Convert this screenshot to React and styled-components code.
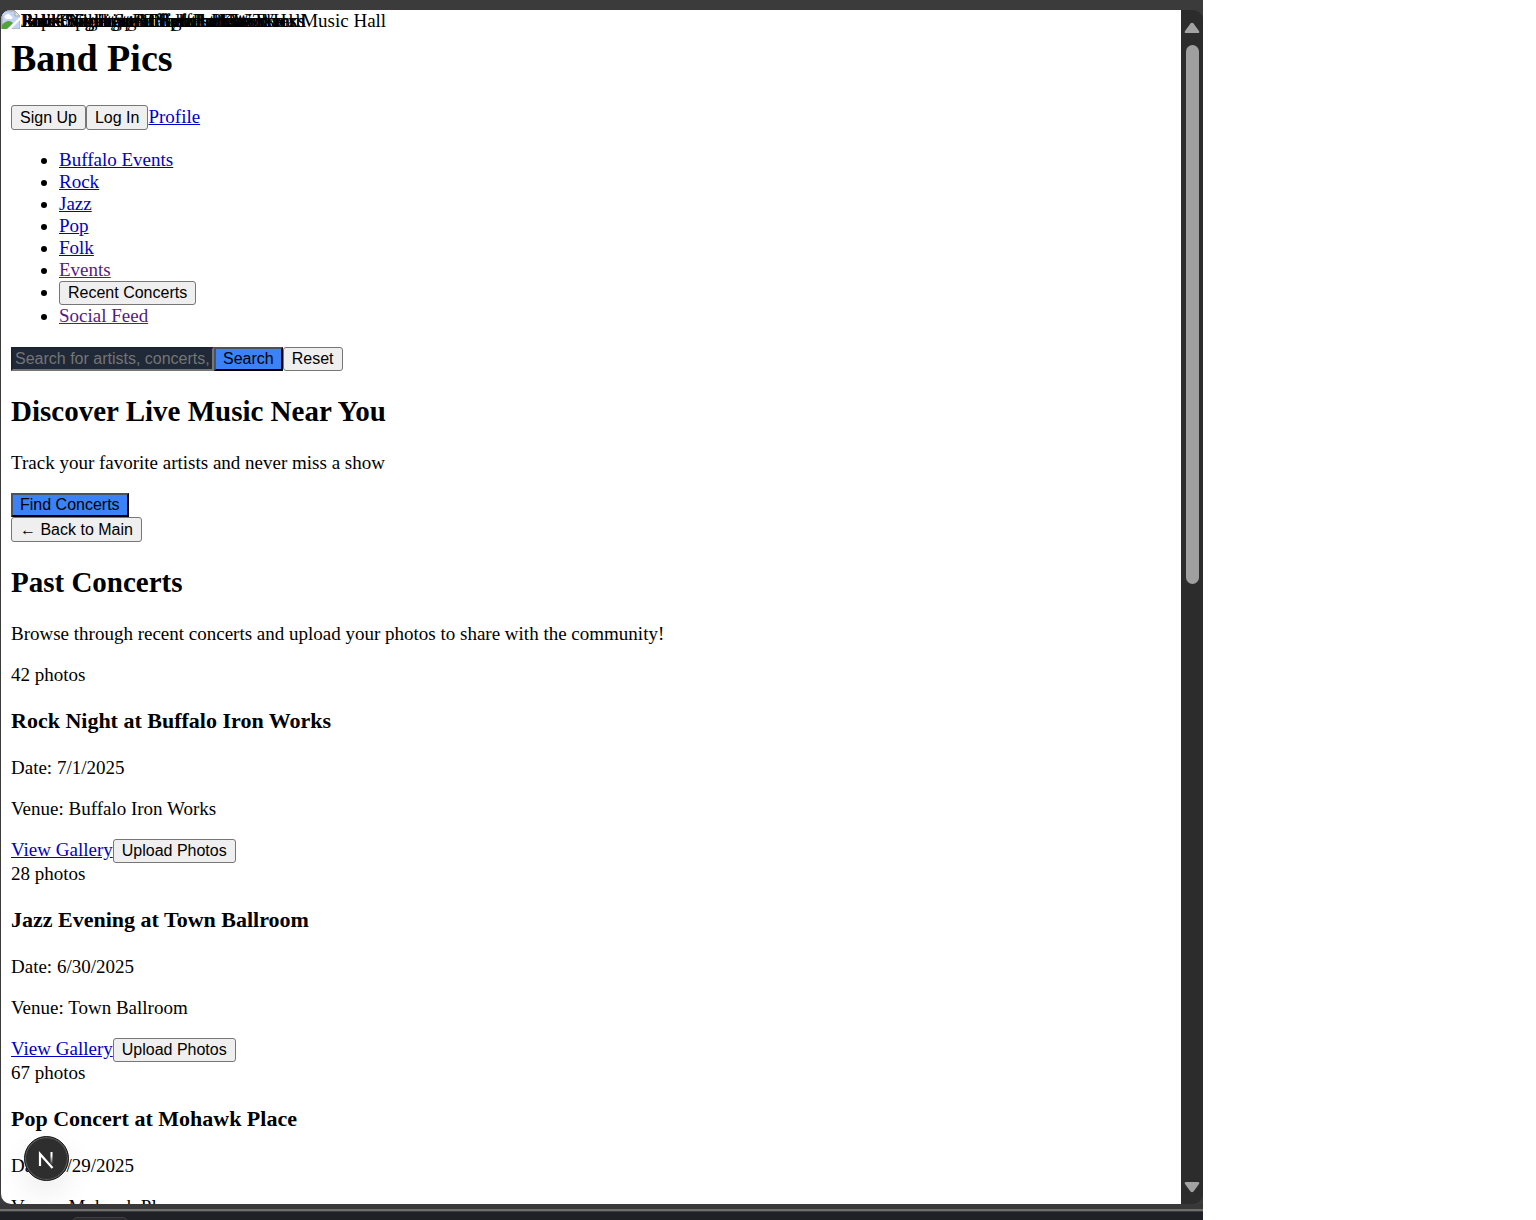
import React from "react";
import styled, { createGlobalStyle, css } from "styled-components";

const Global = createGlobalStyle`
  *, *::before, *::after { box-sizing: border-box; }
  body { margin: 0; background: #fff; color: #000; font: 19px/22px "Liberation Serif", "Times New Roman", serif; }
`;

const Window = styled.div`
  display: flex;
  flex-direction: column;
  width: 100%;
  max-width: 1203px;
  height: 100vh;
  padding-top: 10px;
  background: #3b3b3b;
`;

const Body = styled.div`
  flex: 1;
  min-height: 0;
  display: flex;
  padding-left: 1px;
`;

const Viewport = styled.div`
  position: relative;
  flex: 1;
  min-width: 0;
  overflow: hidden;
  background: #fff;
  border-radius: 10px 0 0 10px;
`;

const Page = styled.div`
  padding: 26px 10px 0;
`;

const AltLayer = styled.div`
  position: absolute;
  top: 0;
  left: 0;
  height: 22px;
  width: 100%;
`;

const AltImage = styled.div`
  position: absolute;
  inset: 0;
  display: flex;
  gap: 1px;
  white-space: nowrap;
`;

const Title = styled.h1`
  margin: 0 0 24px;
  font-size: 38px;
  line-height: 45px;
`;

const Heading = styled.h2`
  margin: 24px 0;
  font-size: 29px;
  line-height: 33px;
`;

const Subheading = styled.h3`
  margin: 22px 0 24px;
  font-size: 22px;
  line-height: 25px;
`;

const Text = styled.p`
  margin: 19px 0;
`;

const Row = styled.div`
  display: flex;
  align-items: baseline;
`;

const Link = styled.a`
  color: ${(p) => (p.$visited ? "#551a8b" : "#0000c8")};
  text-decoration: underline;
`;

const List = styled.ul`
  margin: 19px 0 20px;
  padding-left: 48px;
`;

const controlFont = css`
  font: 16px/18px "Liberation Sans", Arial, sans-serif;
  color: #000;
`;

const Button = styled.button`
  ${controlFont}
  display: block;
  height: ${(p) => (p.$tall ? "25px" : "24px")};
  padding: 0 8px;
  white-space: nowrap;
  border: 1px solid #767676;
  border-radius: 3px;
  background: #efefef;
  ${(p) =>
    p.$primary &&
    css`
      padding: 0 7px;
      border: 2px solid;
      border-color: #4a5260 #000 #000 #4a5260;
      border-radius: 0;
      background: #3b82f6;
    `}
`;

const SearchInput = styled.input`
  ${controlFont}
  width: 203px;
  height: 24px;
  padding: 0 2px;
  border: 2px solid;
  border-color: #1d2431 #767676 #767676 #1d2431;
  border-radius: 0;
  background: #1f2937;
  color: #fff;
  &::placeholder { color: #757575; opacity: 1; }
`;

const Rail = styled.div`
  width: 22px;
  display: flex;
  flex-direction: column;
  align-items: center;
  padding: 12px 0 11px;
  background: #2c2c2c;
  border-radius: 0 10px 10px 0;
`;

const Thumb = styled.div`
  width: 13px;
  height: 46%;
  margin: 11px 0 auto;
  border-radius: 7px;
  background: #9f9f9f;
`;

const Taskbar = styled.div`
  height: 16px;
  padding-top: 5px;
  background: #383838;
`;

const TaskbarEdge = styled.div`
  height: 11px;
  border-top: 2px solid #6f6f6f;
  background: #202126;
  box-shadow: inset 0 1px 0 #3b3b3b;
  padding: 6px 0 0 72px;
  overflow: hidden;
`;

const Tab = styled.div`
  width: 56px;
  height: 10px;
  border: 1px solid #3f3f3f;
  border-radius: 6px;
  background: #2c2c2c;
`;

const DevBadge = styled.button`
  position: absolute;
  left: 23px;
  bottom: 23px;
  width: 45px;
  height: 45px;
  padding: 0;
  border: 1px solid #151515;
  border-radius: 50%;
  background: #2e2e2e;
  box-shadow: inset 0 0 0 1px #626262, 0 12px 30px rgba(0, 0, 0, 0.08);
  svg { display: block; }
`;

const categories = [
  { label: "Buffalo Events" },
  { label: "Rock" },
  { label: "Jazz" },
  { label: "Pop" },
  { label: "Folk" },
  { label: "Events", visited: true },
  { label: "Recent Concerts", button: true },
  { label: "Social Feed", visited: true },
];

const concerts = [
  { title: "Rock Night at Buffalo Iron Works", date: "7/1/2025", venue: "Buffalo Iron Works", photos: 42 },
  { title: "Jazz Evening at Town Ballroom", date: "6/30/2025", venue: "Town Ballroom", photos: 28 },
  { title: "Pop Concert at Mohawk Place", date: "6/29/2025", venue: "Mohawk Place", photos: 67 },
];

const altTexts = [
  "Rock Night at Buffalo Iron Works",
  "Jazz Evening at Town Ballroom",
  "Pop Concert at Mohawk Place",
  "Public Orchestra Night at Kleinhans Music Hall",
  "Indie Spotlight at Buffalo Iron Works",
  "Folk Gathering at Sportsmens Tavern",
  "Blues Night at Buffalo Iron Works",
  "Rock Night Spectacular at Town Hall",
];

function BrokenImage() {
  return (
    <svg width="19" height="19" viewBox="0 0 19 19" aria-hidden="true">
      <path d="M1 1h13l5 5v13H1z" fill="#c3d4f3" stroke="#a8a8a8" />
      <path d="M4 8a3 2 0 0 1 1-3 3 3 0 0 1 5 1 2 2 0 0 1 1 3H5z" fill="#fff" />
      <path d="M1 19v-4q6-7 11-2l-5 6z" fill="#52a33a" />
      <path d="M6 19L19 7v3L10 19z" fill="#fff" />
      <path d="M14 1v5h5z" fill="#e8e8e8" stroke="#a8a8a8" />
    </svg>
  );
}

function Arrow({ down }) {
  return (
    <svg width="16" height="12" viewBox="0 0 16 12" aria-hidden="true">
      <path
        d={down ? "M2 1h12q2 0 1 2L9.500 10.500q-1.500 1.500-3 0L1 3q-1-2 1-2z" : "M2 11h12q2 0 1-2L9.500 1.500q-1.500-1.500-3 0L1 9q-1 2 1 2z"}
        fill="#a2a2a2"
      />
    </svg>
  );
}

function Concert({ concert }) {
  return (
    <article>
      <div>{concert.photos} photos</div>
      <Subheading>{concert.title}</Subheading>
      <Text>Date: {concert.date}</Text>
      <Text>Venue: {concert.venue}</Text>
      <Row>
        <Link href="#gallery">View Gallery</Link>
        <Button type="button">Upload Photos</Button>
      </Row>
    </article>
  );
}

export default function App() {
  return (
    <Window>
      <Global />
      <Body>
        <Viewport>
          <AltLayer>
            {altTexts.map((t) => (
              <AltImage key={t}>
                <BrokenImage />
                <span>{t}</span>
              </AltImage>
            ))}
          </AltLayer>
          <Page>
            <Title>Band Pics</Title>
            <Row>
              <Button type="button" $tall>Sign Up</Button>
              <Button type="button" $tall>Log In</Button>
              <Link href="#profile">Profile</Link>
            </Row>
            <List>
              {categories.map((c) => (
                <li key={c.label}>
                  {c.button ? (
                    <Button type="button">{c.label}</Button>
                  ) : (
                    <Link href="#category" $visited={c.visited}>{c.label}</Link>
                  )}
                </li>
              ))}
            </List>
            <Row as="form">
              <SearchInput type="text" aria-label="Search" placeholder="Search for artists, concerts, or venues" />
              <Button type="button" $primary>Search</Button>
              <Button type="button">Reset</Button>
            </Row>
            <Heading>Discover Live Music Near You</Heading>
            <Text>Track your favorite artists and never miss a show</Text>
            <Button type="button" $primary>Find Concerts</Button>
            <Button type="button" $tall>← Back to Main</Button>
            <Heading>Past Concerts</Heading>
            <Text>Browse through recent concerts and upload your photos to share with the community!</Text>
            {concerts.map((c) => (
              <Concert key={c.title} concert={c} />
            ))}
          </Page>
          <DevBadge type="button" aria-label="Open developer tools">
            <svg width="43" height="43" viewBox="0 0 43 43" fill="none" strokeWidth="2" aria-hidden="true">
              <defs>
                <linearGradient id="fade" x1="0" y1="0" x2="0" y2="1">
                  <stop offset="0.3" stopColor="#fff" />
                  <stop offset="1" stopColor="#fff" stopOpacity="0.1" />
                </linearGradient>
              </defs>
              <path d="M15 29V17L27.500 31" stroke="#fff" strokeWidth="2.200" />
              <path d="M25.500 15h2v12h-2z" fill="url(#fade)" />
            </svg>
          </DevBadge>
        </Viewport>
        <Rail>
          <Arrow />
          <Thumb />
          <Arrow down />
        </Rail>
      </Body>
      <Taskbar>
        <TaskbarEdge>
          <Tab />
        </TaskbarEdge>
      </Taskbar>
    </Window>
  );
}
